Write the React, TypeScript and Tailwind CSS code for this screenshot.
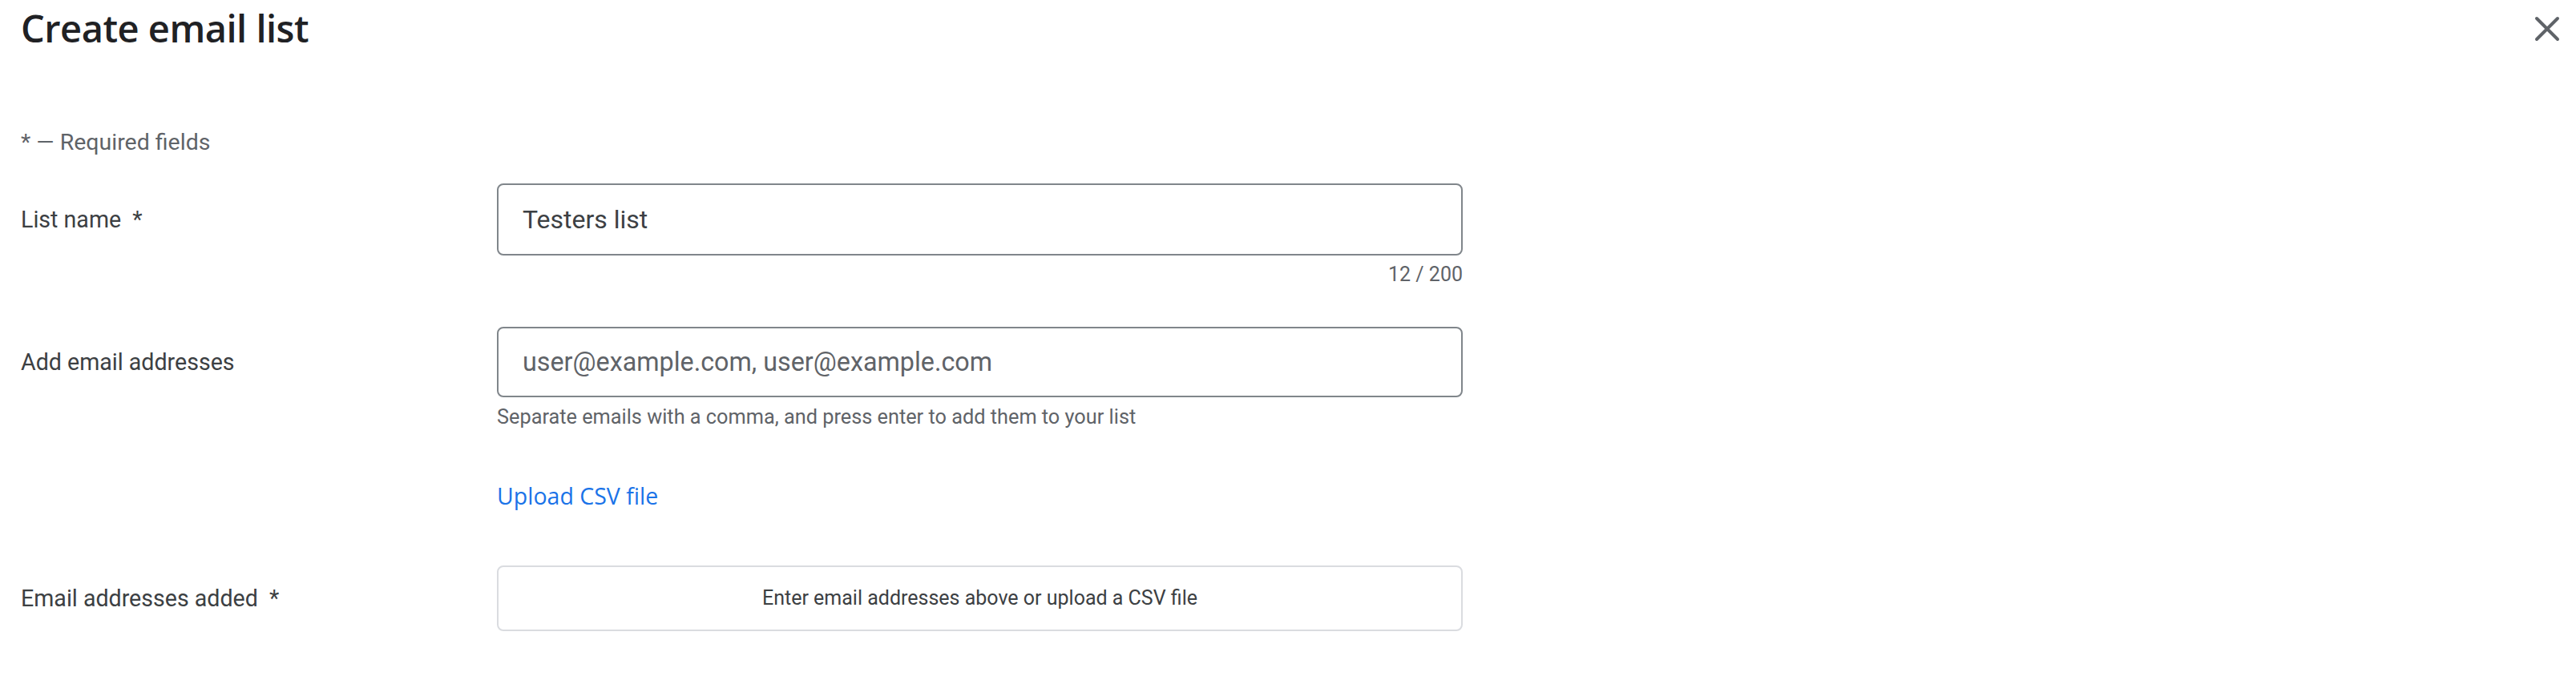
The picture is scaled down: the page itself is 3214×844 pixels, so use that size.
import React from 'react';

const CloseIcon: React.FC = () => (
  <svg width="48" height="48" viewBox="0 0 24 24" fill="none" stroke="#5f6368" strokeWidth={2} strokeLinecap="round">
    <path d="M5.5 5.5L18.5 18.5M18.5 5.5L5.5 18.5" />
  </svg>
);

const App: React.FC = () => {
  return (
    <div className="w-[3214px] h-[844px] bg-white overflow-hidden font-['Roboto',sans-serif] text-[#3c4043]">
      <div className="flex h-[70px] items-center justify-between pl-[26px] pr-[12px]">
        <h1 className="font-['Open_Sans',sans-serif] text-[47px] font-semibold leading-none tracking-[-0.5px] text-[#202124]">
          Create email list
        </h1>
        <button className="mt-[2px] flex h-[48px] w-[48px] items-center justify-center">
          <CloseIcon />
        </button>
      </div>

      <div className="pl-[26px]">
        <p className="mt-[90px] text-[28.5px] leading-[36px] text-[#5f6368]">* — Required fields</p>

        <div className="mt-[33px] flex">
          <div className="flex h-[90px] w-[594px] items-center text-[28.6px]">
            List name&nbsp;&nbsp;*
          </div>
          <div className="w-[1205px]">
            <div className="flex h-[90px] items-center rounded-[8px] border-2 border-[#80868b] px-[30px] text-[32px] text-[#3c4043]">
              Testers list
            </div>
            <div className="mt-[9px] text-right text-[25px] leading-[30px] text-[#5f6368]">12 / 200</div>
          </div>
        </div>

        <div className="mt-[50px] flex">
          <div className="flex h-[88px] w-[594px] items-center text-[28.6px]">Add email addresses</div>
          <div className="w-[1205px]">
            <div className="flex h-[88px] items-center rounded-[8px] border-2 border-[#80868b] px-[30px] text-[32.3px] text-[#5f6368]">
              user@example.com, user@example.com
            </div>
            <p className="mt-[10px] text-[25.3px] leading-[30px] text-[#5f6368]">
              Separate emails with a comma, and press enter to add them to your list
            </p>
            <button className="mt-[65px] block font-['Open_Sans',sans-serif] text-[28.5px] font-medium leading-[36px] text-[#1a73e8]">
              Upload CSV file
            </button>
          </div>
        </div>

        <div className="mt-[69px] flex">
          <div className="flex h-[82px] w-[594px] items-center text-[28.6px]">
            Email addresses added&nbsp;&nbsp;*
          </div>
          <div className="flex h-[82px] w-[1205px] items-center justify-center rounded-[8px] border-2 border-[#dadce0] text-[25px] text-[#3c4043]">
            Enter email addresses above or upload a CSV file
          </div>
        </div>
      </div>
    </div>
  );
};

export default App;
